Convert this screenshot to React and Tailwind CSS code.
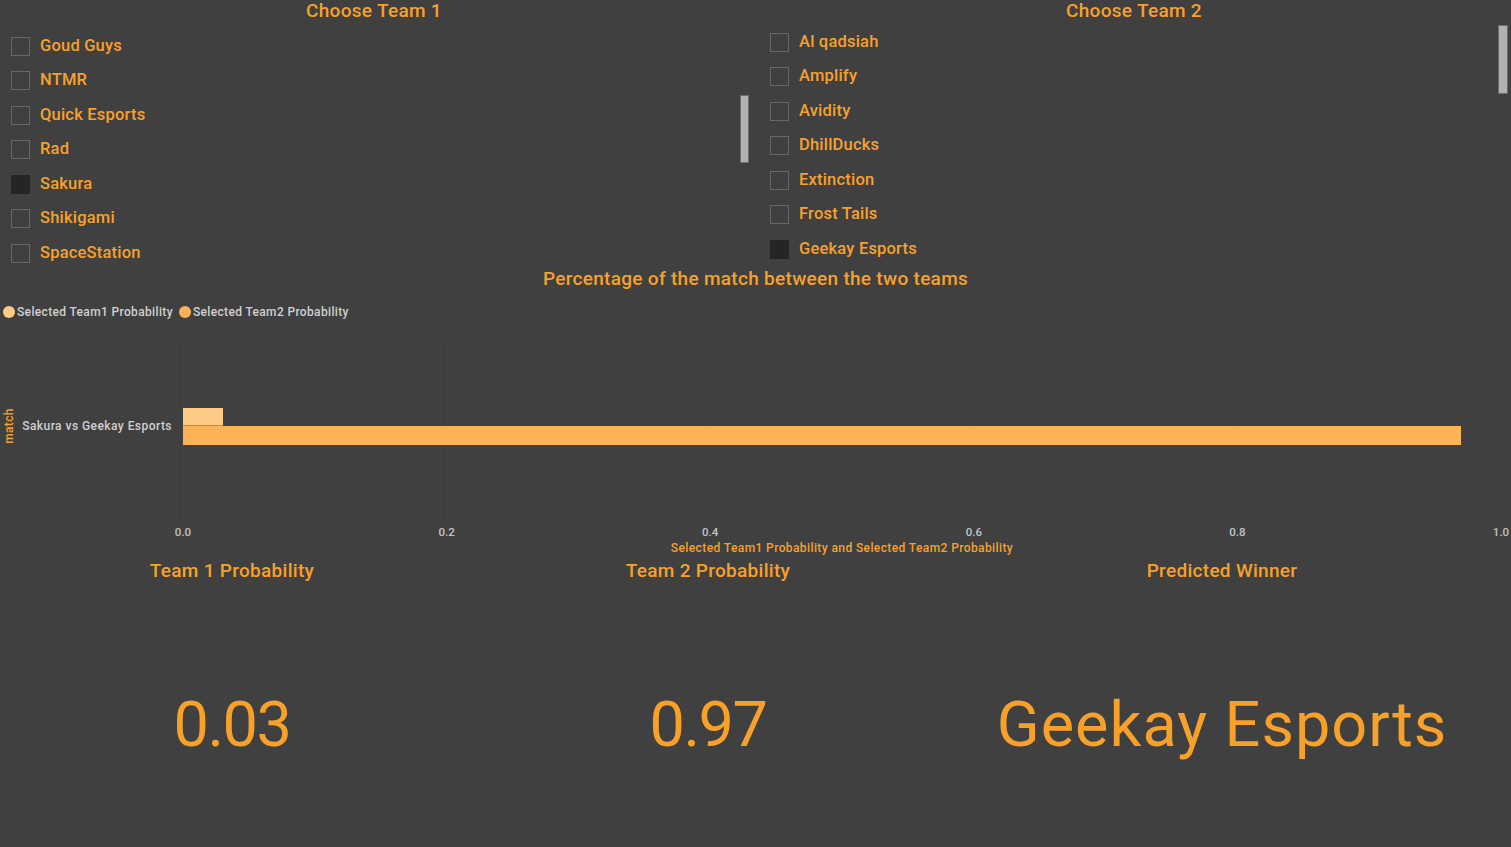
import React from 'react';

const team1List = ['Goud Guys', 'NTMR', 'Quick Esports', 'Rad', 'Sakura', 'Shikigami', 'SpaceStation'];
const team2List = ['Al qadsiah', 'Amplify', 'Avidity', 'DhillDucks', 'Extinction', 'Frost Tails', 'Geekay Esports'];

const team1 = 'Sakura';
const team2 = 'Geekay Esports';
const p1 = 0.03;
const p2 = 0.97;

const ticks = [0, 0.2, 0.4, 0.6, 0.8, 1.0];

const TeamRow = ({ name, selected }) => (
  <div className="flex items-center gap-[10px] h-[34.5px]">
    <div
      className={`w-[19px] h-[19px] border ${
        selected ? 'bg-[#252525] border-[#252525]' : 'border-[#676767]'
      }`}
    />
    <span className="text-[16.5px] font-medium text-[#f7a12b] tracking-[0.2px]">{name}</span>
  </div>
);

const Slicer = ({ title, teams, selected, width, titlePad, listPad, listTop, barRight, barTop, barHeight, barWidth }) => (
  <div className="flex flex-col" style={{ width }}>
    <div
      className="h-[22px] leading-[22px] text-[19px] font-medium text-center text-[#f7a12b] tracking-[0.3px]"
      style={{ paddingRight: titlePad }}
    >
      {title}
    </div>
    <div className="flex flex-1">
      <div className="flex-1 flex flex-col" style={{ paddingLeft: listPad, paddingTop: listTop }}>
        {teams.map((t) => (
          <TeamRow key={t} name={t} selected={t === selected} />
        ))}
      </div>
      {/* scrollbar thumb */}
      <div
        className="bg-[#b1b1b1] border border-[#6c6c6c]"
        style={{ marginTop: barTop, height: barHeight, width: barWidth, marginRight: barRight }}
      />
    </div>
  </div>
);

const MatchChart = () => (
  <div className="flex flex-col h-[290px]">
    <div className="h-[28px] leading-[28px] text-center text-[19px] font-medium text-[#f7a12b] tracking-[0.3px]">
      Percentage of the match between the two teams
    </div>

    <div className="h-[38px] flex items-center pl-[3px] gap-[6px] text-[12px] font-medium text-[#d0d0d0] tracking-[0.35px]">
      <div className="flex items-center gap-[2px]">
        <span className="w-[12px] h-[12px] rounded-full bg-[#ffca85]" />
        <span>Selected Team1 Probability</span>
      </div>
      <div className="flex items-center gap-[2px]">
        <span className="w-[12px] h-[12px] rounded-full bg-[#fbb355]" />
        <span>Selected Team2 Probability</span>
      </div>
    </div>

    <div className="flex h-[190px]">
      <div className="w-[18px] flex items-center justify-center">
        <span className="-rotate-90 text-[12px] font-medium text-[#f7a12b] whitespace-nowrap tracking-[0.3px]">match</span>
      </div>
      <div className="w-[165px] flex items-center justify-end pr-[11px] text-[12px] font-medium text-[#d0d0d0] whitespace-nowrap tracking-[0.45px]">
        {team1} vs {team2}
      </div>
      <div className="flex-1 relative mr-[10px]">
        {ticks.map((t) => (
          <div
            key={t}
            className="absolute top-[8px] bottom-0 border-l border-dotted border-[#474747]"
            style={{ left: `${t * 100}%` }}
          />
        ))}
        <div className="absolute inset-0 flex flex-col justify-center pt-[1px]">
          <div className="h-[18px] bg-[#ffca85] border-b border-[#b48b55]" style={{ width: `${p1 * 100}%` }} />
          <div className="h-[19px] bg-[#fbb355]" style={{ width: `${p2 * 100}%` }} />
        </div>
      </div>
    </div>

    <div className="h-[22px] ml-[183px] mr-[10px] relative text-[11.5px] font-medium text-[#c4c4c4]">
      {ticks.map((t) => (
        <span
          key={t}
          className="absolute top-0 leading-[22px] -translate-x-1/2"
          style={{ left: `${t * 100}%` }}
        >
          {t.toFixed(1)}
        </span>
      ))}
    </div>
    <div className="h-[10px] leading-[10px] ml-[183px] mr-[10px] text-center text-[12px] font-medium text-[#f7a12b] tracking-[0.4px] whitespace-nowrap">
      Selected Team1 Probability and Selected Team2 Probability
    </div>
  </div>
);

const Card = ({ title, value, wide }) => (
  <div className="flex flex-col items-center">
    <div className="h-[32px] leading-[32px] text-[19px] font-medium text-[#f7a12b] tracking-[0.3px]">{title}</div>
    <div
      className={`mt-[106px] leading-none text-[63px] text-[#f7a12b] whitespace-nowrap ${
        wide ? 'tracking-[1px]' : 'tracking-[-1.5px]'
      }`}
    >
      {value}
    </div>
  </div>
);

export default function App() {
  return (
    <div className="w-[1511px] h-[847px] overflow-hidden bg-[#404040] font-['Roboto','Noto_Sans',sans-serif]">
      <div className="flex h-[265px]">
        <Slicer
          title="Choose Team 1"
          teams={team1List}
          selected={team1}
          width={760}
          titlePad={12}
          listPad={11}
          listTop={7}
          barRight={11}
          barTop={73}
          barHeight={68}
          barWidth={9}
        />
        <Slicer
          title="Choose Team 2"
          teams={team2List}
          selected={team2}
          width={751}
          titlePad={3}
          listPad={10}
          listTop={3}
          barRight={3}
          barTop={3}
          barHeight={69}
          barWidth={10}
        />
      </div>

      <MatchChart />

      <div className="grid grid-cols-[464px_464px_540px] gap-3">
        <Card title="Team 1 Probability" value={p1.toFixed(2)} />
        <Card title="Team 2 Probability" value={p2.toFixed(2)} />
        <Card title="Predicted Winner" value={p1 > p2 ? team1 : team2} wide />
      </div>
    </div>
  );
}
